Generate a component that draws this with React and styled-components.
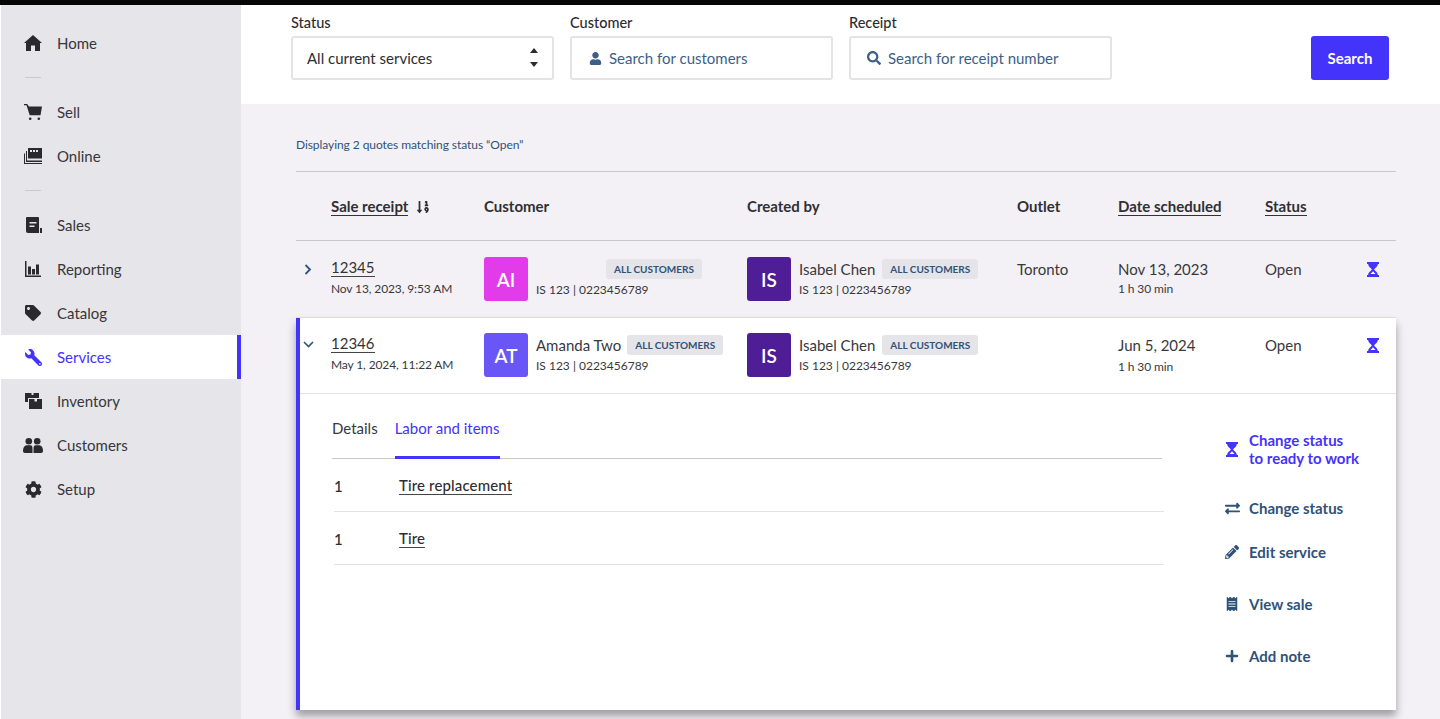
import React from "react";
import styled, { createGlobalStyle } from "styled-components";
import { FaTag, FaWrench, FaCog, FaUser, FaSearch, FaSortNumericDown, FaExchangeAlt, FaPencilAlt, FaReceipt, FaPlus } from "react-icons/fa";

const BLUE = "#4433fb";
const INK = "#2d2d32";
const NAVY = "#2f5279";

const Global = createGlobalStyle`
  html, body { margin: 0; padding: 0; height: 719px; overflow: hidden; background: #fff; }
  body { font-family: Lato, "Open Sans", sans-serif; color: ${INK}; }
  * { box-sizing: border-box; }
`;

const Shell = styled.div`display:flex;flex-direction:column;width:1440px;height:719px;overflow:hidden;`;
const TopBar = styled.div`height:5px;background:#060606;flex:none;`;
const Body = styled.div`display:flex;flex:1;min-height:0;padding-left:1px;`;

const Sidebar = styled.nav`width:240px;flex:none;background:#e6e5e9;padding-top:16px;`;
const NavItem = styled.div`
  height:44px;display:flex;align-items:center;padding-left:22px;font-size:15px;
  color:${p => p.$active ? BLUE : "#36363b"};
  background:${p => p.$active ? "#fff" : "transparent"};
  border-right:${p => p.$active ? `4px solid ${BLUE}` : "0"};
`;
const NavIcon = styled.span`width:20px;margin-right:14px;flex:none;display:flex;align-items:center;justify-content:center;color:${p => p.$active ? BLUE : "#29292e"};`;
const NavRule = styled.div`width:16px;height:1px;background:#c9c8cc;margin:12px 0 12px 24px;`;
const Flip = styled.span`display:flex;transform:scaleX(-1);`;

const Main = styled.main`flex:1;min-width:0;display:flex;flex-direction:column;background:#f3f1f5;`;
const FilterBar = styled.div`height:99px;flex:none;background:#fff;display:flex;align-items:flex-start;padding:10px 51px 0 50px;gap:16px;`;
const Field = styled.label`display:flex;flex-direction:column;width:263px;`;
const FieldLabel = styled.span`font-size:14.5px;font-weight:500;line-height:16px;margin-bottom:5px;color:#2b2b30;`;
const InputBox = styled.div`
  height:44px;border:2px solid #e4e4e7;border-radius:3px;background:#fff;display:flex;align-items:center;
  padding-left:${p => p.$pad || 14}px;gap:${p => p.$gap || 8}px;font-size:15px;color:${p => p.$muted ? "#3d5f87" : INK};position:relative;
`;
const SelectArrows = styled.span`position:absolute;right:14px;top:10px;display:flex;flex-direction:column;gap:9px;`;
const SearchButton = styled.button`
  margin:21px 0 0 auto;width:78px;height:44px;border:0;border-radius:3px;background:${BLUE};color:#fff;
  font:700 15px Lato, sans-serif;
`;

const Content = styled.div`flex:1;min-height:0;padding:0 44px 0 55px;display:flex;flex-direction:column;`;
const Summary = styled.div`font-size:12px;letter-spacing:-.07px;color:${NAVY};height:68px;padding-top:33px;line-height:16px;border-bottom:1px solid #c8c8cb;flex:none;`;

const cols = (first) => `${first}px 153px 263px 270px 101px 147px 102px 1fr`;
const HeadRow = styled.div`display:grid;grid-template-columns:${cols(35)};height:69px;flex:none;align-items:center;border-bottom:1px solid #c8c8cb;font-size:15px;font-weight:700;color:#2f2f34;`;
const HeadLink = styled.span`display:inline-block;border-bottom:1px solid #333;line-height:17px;`;
const SortWrap = styled.span`display:inline-flex;align-items:center;gap:8px;`;

const Row = styled.div`
  display:grid;grid-template-columns:${p => cols(p.$open ? 31 : 35)};height:${p => p.$open ? 76 : 77}px;padding-top:${p => p.$open ? 15 : 16}px;
  border-bottom:1px solid #e2e2e5;align-items:start;flex:none;
`;
const Chevron = styled.span`display:flex;padding:${p => p.$open ? "8px 0 0 3px" : "7px 0 0 8px"};color:${NAVY};`;
const Receipt = styled.div`font-size:15px;line-height:19px;padding-top:1px;`;
const ReceiptLink = styled.span`border-bottom:1px solid #444;display:inline-block;line-height:17px;color:#333;`;
const SubText = styled.div`font-size:12px;line-height:16px;letter-spacing:${p => p.$tight ? "-.12px" : "0"};margin-top:${p => p.$top ?? 4}px;color:#38383d;`;
const Person = styled.div`display:flex;gap:8px;`;
const Avatar = styled.div`width:44px;height:44px;border-radius:3px;background:${p => p.$color};color:#fff;display:flex;align-items:center;justify-content:center;font-size:19px;font-weight:600;`;
const PersonLine = styled.div`display:flex;align-items:center;height:24px;gap:6px;font-size:15px;color:#38383d;white-space:nowrap;`;
const Pill = styled.span`height:20px;padding:0 8px;border-radius:3px;background:#e5e4e9;color:${NAVY};font-size:10px;font-weight:700;line-height:20px;margin-left:${p => p.$offset || 0}px;`;
const Plain = styled.div`font-size:15px;line-height:24px;color:#38383d;`;
const StatusIcon = styled.div`padding-top:5px;color:${BLUE};display:flex;`;

const Card = styled.section`background:#fff;border-left:4px solid ${BLUE};box-shadow:0 6px 8px rgba(40,40,50,.42);height:392px;flex:none;`;
const Panel = styled.div`display:flex;height:316px;`;
const Tabs = styled.div`flex:none;width:862px;padding:16px 0 0 32px;`;
const TabBar = styled.div`display:flex;gap:17px;width:830px;height:49px;border-bottom:1px solid #c8c8cb;font-size:15px;`;
const Tab = styled.div`height:49px;line-height:36px;color:${p => p.$active ? BLUE : "#38383d"};border-bottom:${p => p.$active ? `3px solid ${BLUE}` : "0"};padding-right:${p => p.$active ? "1px" : "0"};`;
const ItemRow = styled.div`display:flex;width:830px;margin-left:2px;height:53px;padding-top:2px;align-items:center;border-bottom:1px solid #e3e3e5;font-size:15px;font-weight:500;`;
const Qty = styled.span`width:65px;`;
const ItemName = styled.span`border-bottom:1px solid #444;line-height:17px;letter-spacing:.13px;color:#2d2d32;`;

const Actions = styled.div`flex:1;padding-top:37px;`;
const Action = styled.div`
  display:flex;align-items:center;height:${p => p.$h || 18}px;margin-top:${p => p.$mt || 0}px;margin-left:62px;
  font-size:15px;font-weight:700;line-height:18px;color:${p => p.$primary ? BLUE : NAVY};
`;
const ActionIcon = styled.span`width:16px;margin-right:9px;flex:none;display:flex;justify-content:center;`;

const Hourglass = () => (
  <svg width="12" height="15" viewBox="0 0 12 15" fill="currentColor">
    <rect x="0" y="0" width="12" height="2" />
    <rect x="0" y="13" width="12" height="2" />
    <path d="M1.200 2h9.600c0 2.900-2.700 3.900-3.700 5.500 1 1.600 3.700 2.600 3.700 5.500H1.200c0-2.900 2.700-3.900 3.700-5.500C3.900 5.900 1.200 4.900 1.200 2z" />
    <path d="M6 9.200c.7 1 1.900 1.800 2.400 2.800H3.600c.5-1 1.700-1.800 2.400-2.800z" fill="#fff" />
  </svg>
);
const HomeIcon = () => (
  <svg width="18" height="16" viewBox="0 0 18 16" fill="currentColor"><path d="M9 0l9 8h-2v8h-5v-5.500H7V16H2V8H0z" /></svg>
);
const CartIcon = () => (
  <svg width="18" height="16" viewBox="0 0 18 16" fill="currentColor">
    <path d="M0 0h3.200l1.700 2.400H18l-1.500 8.800H5.700L2.500 1.300H0z" />
    <circle cx="6.200" cy="14.700" r="1.300" /><circle cx="14.800" cy="14.700" r="1.300" />
  </svg>
);
const OnlineIcon = () => (
  <svg width="18" height="16" viewBox="0 0 18 16" fill="currentColor">
    <path d="M4 0h14v10.500H4z" />
    <path d="M2 3h1v9.500h15V14H2z" />
    <path d="M0 5.500h1V15h17v1H0z" />
    <rect x="6" y="2" width="2" height="2" fill="#e6e5e9" /><rect x="9" y="2" width="2" height="2" fill="#e6e5e9" /><rect x="12" y="2" width="2" height="2" fill="#e6e5e9" />
  </svg>
);
const SalesIcon = () => (
  <svg width="17" height="16" viewBox="0 0 17 16" fill="currentColor">
    <path d="M2 0h11a1 1 0 0 1 1 1v15H3a2 2 0 0 1-2-2V1a1 1 0 0 1 1-1z" />
    <rect x="15" y="11" width="2" height="5" />
    <rect x="4.500" y="5" width="7" height="1.500" fill="#e6e5e9" /><rect x="4.500" y="8.500" width="5" height="1.500" fill="#e6e5e9" />
  </svg>
);
const ReportIcon = () => (
  <svg width="16" height="16" viewBox="0 0 16 16" fill="currentColor">
    <path d="M0 0h1.500v14.500H16V16H0z" />
    <rect x="3" y="5.500" width="3" height="8" /><rect x="7" y="8" width="3" height="5.500" /><rect x="11" y="3.500" width="3" height="10" />
  </svg>
);
const InventoryIcon = () => (
  <svg width="17" height="16" viewBox="0 0 17 16" fill="currentColor">
    <path d="M0 0h6.500v2h2V0H14v5H3v4H0z" />
    <path d="M4 6h5.500v2.500H12V6h5v10H4z" />
  </svg>
);
const PeopleIcon = () => (
  <svg width="20" height="15" viewBox="0 0 20 15" fill="currentColor">
    <circle cx="5.800" cy="3.300" r="3.300" /><circle cx="14.200" cy="3.300" r="3.300" />
    <path d="M0 13c0-3.600 1.500-5.800 4-5.800h3.500c1.500 0 2 1.500 2 3.500V15H2c-1.200 0-2-.8-2-2z" />
    <path d="M20 13c0-3.600-1.500-5.800-4-5.800h-3.500c-1.500 0-2 1.500-2 3.500V15H18c1.200 0 2-.8 2-2z" />
  </svg>
);
const Triangle = ({ down }) => (
  <svg width="8" height="5" viewBox="0 0 8 5" fill="#2b2b30"><path d={down ? "M0 0h8L4 5z" : "M0 5h8L4 0z"} /></svg>
);
const ChevronRight = () => (
  <svg width="8" height="11" viewBox="0 0 8 11" fill="none" stroke="currentColor" strokeWidth="1.800"><path d="M1.500 1l4.500 4.500L1.500 10" /></svg>
);
const ChevronDown = () => (
  <svg width="11" height="7" viewBox="0 0 11 7" fill="none" stroke="currentColor" strokeWidth="1.600"><path d="M1 1l4.500 4.500L10 1" /></svg>
);

const nav = [
  ["Home", <HomeIcon />], "rule",
  ["Sell", <CartIcon />], ["Online", <OnlineIcon />], "rule",
  ["Sales", <SalesIcon />], ["Reporting", <ReportIcon />], ["Catalog", <FaTag size={16} />],
  ["Services", <Flip><FaWrench size={17} /></Flip>, true], ["Inventory", <InventoryIcon />],
  ["Customers", <PeopleIcon />], ["Setup", <FaCog size={17} />],
];

const PersonCell = ({ initials, color, name, offset }) => (
  <Person>
    <Avatar $color={color}>{initials}</Avatar>
    <div>
      <PersonLine>{name && <span>{name}</span>}<Pill $offset={offset}>ALL CUSTOMERS</Pill></PersonLine>
      <SubText $top={1}>IS 123 | 0223456789</SubText>
    </div>
  </Person>
);

export default function App() {
  return (
    <Shell>
      <Global />
      <TopBar />
      <Body>
        <Sidebar>
          {nav.map((n, i) => n === "rule" ? <NavRule key={i} /> : (
            <NavItem key={n[0]} $active={n[2]}><NavIcon $active={n[2]}>{n[1]}</NavIcon>{n[0]}</NavItem>
          ))}
        </Sidebar>
        <Main>
          <FilterBar>
            <Field>
              <FieldLabel>Status</FieldLabel>
              <InputBox>All current services<SelectArrows><Triangle /><Triangle down /></SelectArrows></InputBox>
            </Field>
            <Field>
              <FieldLabel>Customer</FieldLabel>
              <InputBox $muted $pad={17} $gap={7}><FaUser size={13} />Search for customers</InputBox>
            </Field>
            <Field>
              <FieldLabel>Receipt</FieldLabel>
              <InputBox $muted $pad={16} $gap={7}><FaSearch size={14} />Search for receipt number</InputBox>
            </Field>
            <SearchButton>Search</SearchButton>
          </FilterBar>
          <Content>
            <Summary>Displaying 2 quotes matching status “Open”</Summary>
            <HeadRow>
              <span />
              <div><SortWrap><HeadLink>Sale receipt</HeadLink><FaSortNumericDown size={14} /></SortWrap></div>
              <div>Customer</div>
              <div>Created by</div>
              <div>Outlet</div>
              <div><HeadLink>Date scheduled</HeadLink></div>
              <div><HeadLink>Status</HeadLink></div>
              <span />
            </HeadRow>
            <Row>
              <Chevron><ChevronRight /></Chevron>
              <Receipt><ReceiptLink>12345</ReceiptLink><SubText $tight>Nov 13, 2023, 9:53 AM</SubText></Receipt>
              <PersonCell initials="AI" color="#e23be9" offset={70} />
              <PersonCell initials="IS" color="#4f1d96" name="Isabel Chen" offset={1} />
              <Plain>Toronto</Plain>
              <div><Plain>Nov 13, 2023</Plain><SubText $top={0} $tight>1 h 30 min</SubText></div>
              <Plain>Open</Plain>
              <StatusIcon><Hourglass /></StatusIcon>
            </Row>
            <Card>
              <Row $open>
                <Chevron $open><ChevronDown /></Chevron>
                <Receipt><ReceiptLink>12346</ReceiptLink><SubText $tight>May 1, 2024, 11:22 AM</SubText></Receipt>
                <PersonCell initials="AT" color="#6a55f6" name="Amanda Two" />
                <PersonCell initials="IS" color="#4f1d96" name="Isabel Chen" offset={1} />
                <span />
                <div><Plain>Jun 5, 2024</Plain><SubText $top={2} $tight>1 h 30 min</SubText></div>
                <Plain>Open</Plain>
                <StatusIcon><Hourglass /></StatusIcon>
              </Row>
              <Panel>
                <Tabs>
                  <TabBar>
                    <Tab>Details</Tab>
                    <Tab $active>Labor and items</Tab>
                  </TabBar>
                  <ItemRow><Qty>1</Qty><ItemName>Tire replacement</ItemName></ItemRow>
                  <ItemRow><Qty>1</Qty><ItemName>Tire</ItemName></ItemRow>
                </Tabs>
                <Actions>
                  <Action $primary $h={36}><ActionIcon><Hourglass /></ActionIcon><span>Change status<br />to ready to work</span></Action>
                  <Action $mt={32}><ActionIcon><FaExchangeAlt size={15} /></ActionIcon>Change status</Action>
                  <Action $mt={26}><ActionIcon><FaPencilAlt size={14} /></ActionIcon>Edit service</Action>
                  <Action $mt={34}><ActionIcon><FaReceipt size={14} /></ActionIcon>View sale</Action>
                  <Action $mt={34}><ActionIcon><FaPlus size={14} /></ActionIcon>Add note</Action>
                </Actions>
              </Panel>
            </Card>
          </Content>
        </Main>
      </Body>
    </Shell>
  );
}
